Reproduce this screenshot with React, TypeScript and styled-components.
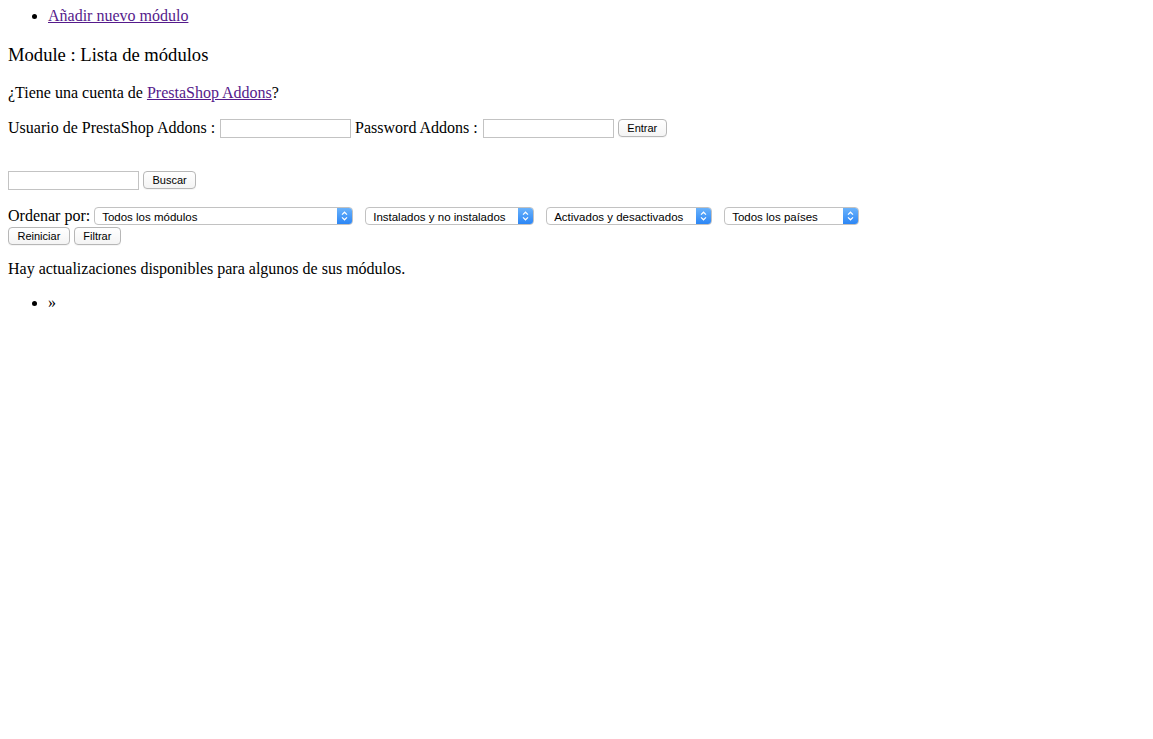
import React from "react"
import styled, { createGlobalStyle } from "styled-components"

const GlobalStyle = createGlobalStyle`
  html, body {
    margin: 0;
    background: #fff;
  }
  body {
    font-family: "Liberation Serif", "Times New Roman", serif;
    font-size: 16px;
    line-height: 18px;
    color: #000;
  }
`

const Page = styled.div`
  display: flex;
  flex-direction: column;
  padding: 7px 8px 0;
`

const BulletList = styled.ul<{ $gap?: number }>`
  margin: ${(p) => p.$gap ?? 0}px 0 0;
  padding-left: 40px;
  list-style: disc;
  line-height: 18px;
`

const Link = styled.a`
  color: #551a8b;
  text-decoration: underline;
  cursor: pointer;
`

const Title = styled.h3`
  margin: 19px 0 0;
  font-size: 18.6px;
  line-height: 22px;
  font-weight: normal;
`

const Para = styled.p<{ $gap: number }>`
  margin: ${(p) => p.$gap}px 0 0;
  line-height: 18px;
`

const Row = styled.div<{ $gap: number }>`
  display: flex;
  align-items: center;
  margin-top: ${(p) => p.$gap}px;
  height: 20px;
  white-space: pre;
`

const Label = styled.span<{ $space?: number }>`
  margin-right: ${(p) => p.$space ?? 5}px;
`

const TextInput = styled.input`
  box-sizing: border-box;
  width: 131px;
  height: 19px;
  margin: 0 4px 0 0;
  padding: 0 3px;
  border: 1px solid #c3c3c3;
  border-radius: 0;
  background: #fff;
  font-family: "Liberation Sans", Arial, sans-serif;
  font-size: 12px;
  outline: none;
`

const Button = styled.button`
  box-sizing: border-box;
  height: 18px;
  margin: 0 4px 0 0;
  padding: 0 8.5px;
  border: 1px solid #b7b7b7;
  border-radius: 4px;
  background: linear-gradient(#ffffff, #f4f4f4);
  box-shadow: 0 1px 0 rgba(0, 0, 0, 0.04);
  font-family: "Liberation Sans", Arial, sans-serif;
  font-size: 11px;
  line-height: 16px;
  color: #000;
  cursor: pointer;
`

const SelectBox = styled.div<{ $width: number }>`
  box-sizing: border-box;
  display: inline-flex;
  align-items: stretch;
  width: ${(p) => p.$width}px;
  height: 18px;
  margin-right: 12px;
  border: 1px solid #c2c2c2;
  border-radius: 4px;
  background: #fff;
  overflow: hidden;
`

const NativeSelect = styled.select`
  flex: 1;
  min-width: 0;
  appearance: none;
  -webkit-appearance: none;
  border: none;
  background: transparent;
  padding: 1px 0 0 7px;
  margin: 0;
  font-family: "Liberation Sans", Arial, sans-serif;
  font-size: 11.5px;
  color: #000;
  outline: none;
`

const Arrow = styled.span`
  display: flex;
  align-items: center;
  justify-content: center;
  width: 15px;
  background: linear-gradient(#6ab2fb, #2c86f5);
`

const ButtonRow = styled.div`
  display: flex;
  align-items: center;
  margin-top: 1px;
  height: 18px;
`

function Chevrons() {
  return (
    <svg width="7" height="10" viewBox="0 0 7 10">
      <path
        d="M1 3.6 L3.5 1.2 L6 3.6 M1 6.4 L3.5 8.8 L6 6.4"
        fill="none"
        stroke="#fff"
        strokeWidth="1.2"
      />
    </svg>
  )
}

function Select({ width, options }: { width: number; options: string[] }) {
  return (
    <SelectBox $width={width}>
      <NativeSelect defaultValue={options[0]}>
        {options.map((o) => (
          <option key={o}>{o}</option>
        ))}
      </NativeSelect>
      <Arrow>
        <Chevrons />
      </Arrow>
    </SelectBox>
  )
}

export default function App() {
  return (
    <>
      <GlobalStyle />
      <Page>
        <BulletList>
          <li>
            <Link>Añadir nuevo módulo</Link>
          </li>
        </BulletList>

        <Title>Module : Lista de módulos</Title>

        <Para $gap={18}>
          ¿Tiene una cuenta de <Link>PrestaShop Addons</Link>?
        </Para>

        <Row $gap={16}>
          <Label>Usuario de PrestaShop Addons :</Label>
          <TextInput type="text" />
          <Label>Password Addons :</Label>
          <TextInput type="password" />
          <Button>Entrar</Button>
        </Row>

        <Row $gap={32}>
          <TextInput type="text" />
          <Button>Buscar</Button>
        </Row>

        <Row $gap={16}>
          <Label $space={4}>Ordenar por:</Label>
          <Select width={259} options={["Todos los módulos"]} />
          <Select width={169} options={["Instalados y no instalados"]} />
          <Select width={166} options={["Activados y desactivados"]} />
          <Select width={135} options={["Todos los países"]} />
        </Row>
        <ButtonRow>
          <Button>Reiniciar</Button>
          <Button>Filtrar</Button>
        </ButtonRow>

        <Para $gap={15}>Hay actualizaciones disponibles para algunos de sus módulos.</Para>

        <BulletList $gap={16}>
          <li>»</li>
        </BulletList>
      </Page>
    </>
  )
}
